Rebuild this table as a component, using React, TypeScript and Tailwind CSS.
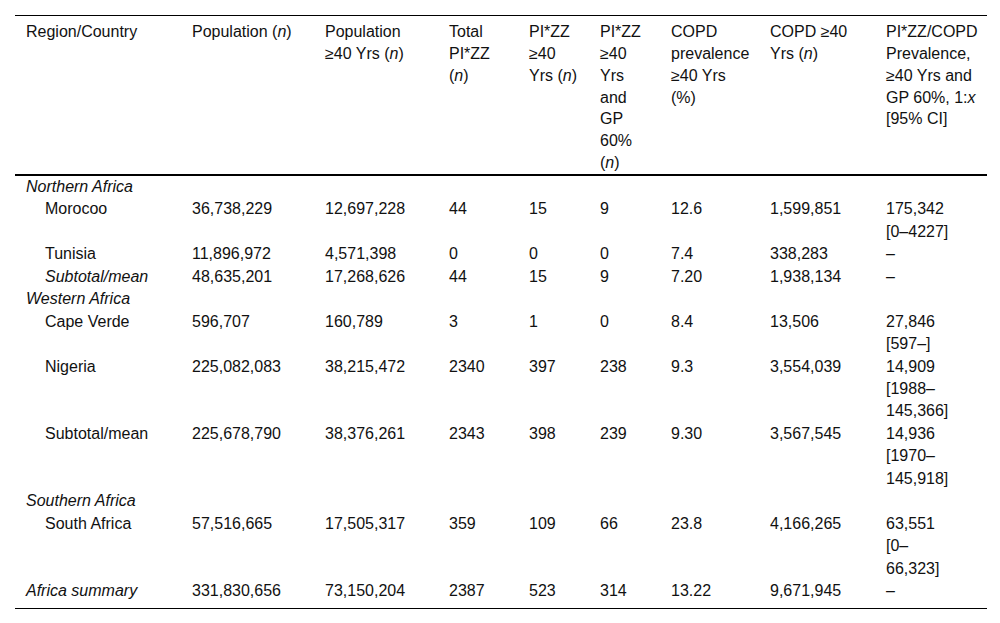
type Row = {
  kind: "region" | "item" | "total";
  label: string;
  italic?: boolean;
  indent?: boolean;
  cells?: string[];
  ci?: string[];
};

const rows: Row[] = [
  { kind: "region", label: "Northern Africa" },
  { kind: "item", label: "Morocoo", indent: true, cells: ["36,738,229", "12,697,228", "44", "15", "9", "12.6", "1,599,851"], ci: ["175,342", "[0–4227]"] },
  { kind: "item", label: "Tunisia", indent: true, cells: ["11,896,972", "4,571,398", "0", "0", "0", "7.4", "338,283"], ci: ["–"] },
  { kind: "item", label: "Subtotal/mean", indent: true, italic: true, cells: ["48,635,201", "17,268,626", "44", "15", "9", "7.20", "1,938,134"], ci: ["–"] },
  { kind: "region", label: "Western Africa" },
  { kind: "item", label: "Cape Verde", indent: true, cells: ["596,707", "160,789", "3", "1", "0", "8.4", "13,506"], ci: ["27,846", "[597–]"] },
  { kind: "item", label: "Nigeria", indent: true, cells: ["225,082,083", "38,215,472", "2340", "397", "238", "9.3", "3,554,039"], ci: ["14,909", "[1988–", "145,366]"] },
  { kind: "item", label: "Subtotal/mean", indent: true, cells: ["225,678,790", "38,376,261", "2343", "398", "239", "9.30", "3,567,545"], ci: ["14,936", "[1970–", "145,918]"] },
  { kind: "region", label: "Southern Africa" },
  { kind: "item", label: "South Africa", indent: true, cells: ["57,516,665", "17,505,317", "359", "109", "66", "23.8", "4,166,265"], ci: ["63,551", "[0–", "66,323]"] },
  { kind: "total", label: "Africa summary", italic: true, cells: ["331,830,656", "73,150,204", "2387", "523", "314", "13.22", "9,671,945"], ci: ["–"] },
];

const cell = "pl-[11px] pr-[6px] align-top text-left font-normal";
const head = `${cell} pt-[5px] pb-0 leading-[21.85px]`;

function Lines({ items }: { items: string[] }) {
  return (
    <>
      {items.map((t, i) => (
        <span key={i} className="block">{t}</span>
      ))}
    </>
  );
}

export default function App() {
  return (
    <div className="min-h-[623px] bg-white pt-[15px] pl-[15px] text-[16px] leading-[22.45px] text-[#111]" style={{ fontFamily: '"Liberation Sans", Arial, sans-serif' }}>
      <table className="w-[972px] table-fixed border-collapse">
        <colgroup>
          <col className="w-[166px]" />
          <col className="w-[133px]" />
          <col className="w-[124px]" />
          <col className="w-[80px]" />
          <col className="w-[71px]" />
          <col className="w-[71px]" />
          <col className="w-[99px]" />
          <col className="w-[116px]" />
          <col className="w-[112px]" />
        </colgroup>
        <thead>
          <tr className="border-t border-b-2 border-black">
            <th className={head}>Region/Country</th>
            <th className={head}>Population (<i>n</i>)</th>
            <th className={head}>
              <span className="block">Population</span>
              <span className="block">≥40 Yrs (<i>n</i>)</span>
            </th>
            <th className={head}>
              <span className="block">Total</span>
              <span className="block">PI*ZZ</span>
              <span className="block">(<i>n</i>)</span>
            </th>
            <th className={head}>
              <span className="block">PI*ZZ</span>
              <span className="block">≥40</span>
              <span className="block">Yrs (<i>n</i>)</span>
            </th>
            <th className={head}>
              <span className="block">PI*ZZ</span>
              <span className="block">≥40</span>
              <span className="block">Yrs</span>
              <span className="block">and</span>
              <span className="block">GP</span>
              <span className="block">60%</span>
              <span className="block">(<i>n</i>)</span>
            </th>
            <th className={head}>
              <span className="block">COPD</span>
              <span className="block">prevalence</span>
              <span className="block">≥40 Yrs</span>
              <span className="block">(%)</span>
            </th>
            <th className={head}>
              <span className="block">COPD ≥40</span>
              <span className="block">Yrs (<i>n</i>)</span>
            </th>
            <th className={head}>
              <span className="block">PI*ZZ/COPD</span>
              <span className="block">Prevalence,</span>
              <span className="block">≥40 Yrs and</span>
              <span className="block">GP 60%, 1:<i>x</i></span>
              <span className="block">[95% CI]</span>
            </th>
          </tr>
        </thead>
        <tbody className="border-b border-black">
          {rows.map((r, i) => {
            const pad = r.kind === "total" ? "pb-[5px]" : "";
            return r.kind === "region" ? (
              <tr key={i}>
                <td className={`${cell} italic`} colSpan={9}>{r.label}</td>
              </tr>
            ) : (
              <tr key={i}>
                <td className={`${cell} ${pad} ${r.indent ? "pl-[30px]" : ""} ${r.italic ? "italic" : ""}`}>{r.label}</td>
                {r.cells!.map((c, j) => (
                  <td key={j} className={`${cell} ${pad}`}>{c}</td>
                ))}
                <td className={`${cell} ${pad}`}>
                  <Lines items={r.ci!} />
                </td>
              </tr>
            );
          })}
        </tbody>
      </table>
    </div>
  );
}
